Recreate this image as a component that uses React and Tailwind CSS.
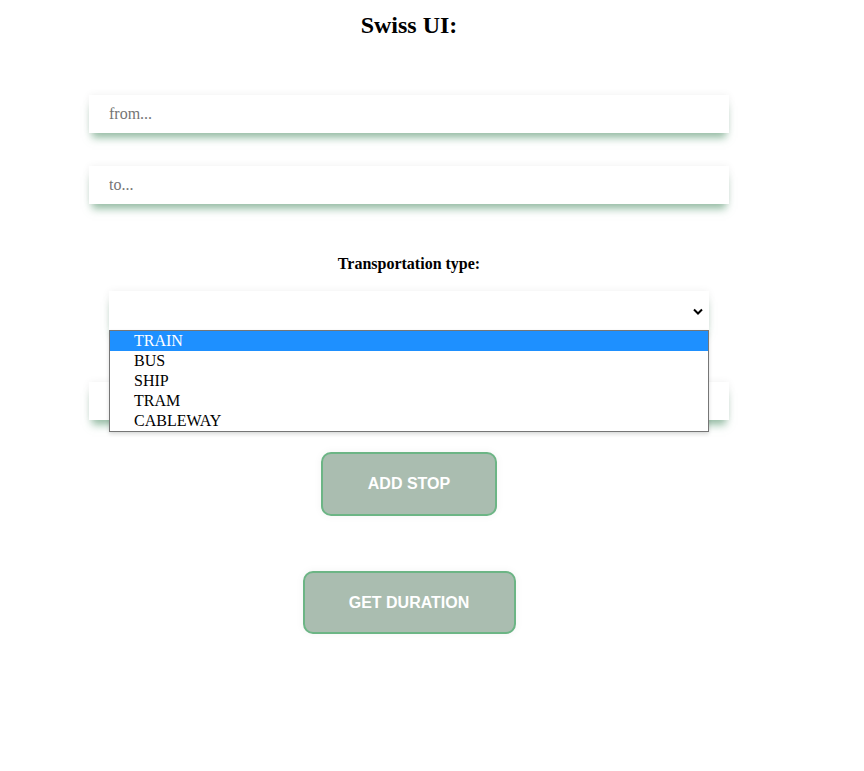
import React from "react";

const serif = { fontFamily: "'Liberation Serif', 'Times New Roman', serif" };
const sans = { fontFamily: "'Liberation Sans', Arial, sans-serif" };

const fieldShadow =
  "shadow-[0_0_8px_rgba(0,0,0,0.06),0_8px_8px_-3px_rgba(90,155,115,0.6)]";

const options = ["TRAIN", "BUS", "SHIP", "TRAM", "CABLEWAY"];

function TextField({ placeholder, className = "" }) {
  return (
    <input
      type="text"
      placeholder={placeholder}
      className={`w-[640px] h-[38px] bg-white pl-5 text-[16px] text-black placeholder:text-[#757575] outline-none ${fieldShadow} ${className}`}
      style={serif}
    />
  );
}

function ActionButton({ children, className = "" }) {
  return (
    <button
      type="button"
      className={`bg-[#aabdb0] border-2 border-[#6cb585] rounded-[10px] text-white font-bold text-[16px] shadow-[0_0_8px_rgba(0,0,0,0.05)] ${className}`}
      style={sans}
    >
      {children}
    </button>
  );
}

export default function App() {
  return (
    <div className="min-h-screen bg-white">
      <div className="w-[818px] flex flex-col items-center" style={serif}>
        <h2 className="pt-[12px] text-[24px] leading-[27px] font-bold text-black">
          Swiss UI:
        </h2>

        <TextField placeholder="from..." className="mt-[56px]" />
        <TextField placeholder="to..." className="mt-[33px]" />

        <label className="mt-[51px] text-[16px] leading-[18px] font-bold text-black">
          Transportation type:
        </label>

        <div className="relative mt-[18px] w-[600px]">
          <div
            className={`h-[39px] bg-white flex items-center justify-end pr-[6px] ${fieldShadow}`}
          >
            <svg width="10" height="7" viewBox="0 0 10 7" className="mt-[1px]">
              <path
                d="M1 1.5 L5 5.5 L9 1.5"
                fill="none"
                stroke="#000"
                strokeWidth="2"
              />
            </svg>
          </div>
          <ul className="absolute left-0 top-[39px] z-10 w-[600px] bg-white border border-[#767676] shadow-[0_2px_4px_rgba(0,0,0,0.15)]">
            {options.map((opt, i) => (
              <li
                key={opt}
                className={`h-5 pl-[24px] text-[16px] leading-5 ${
                  i === 0 ? "bg-[#1e90ff] text-white" : "text-black"
                }`}
              >
                {opt}
              </li>
            ))}
          </ul>
        </div>

        <TextField placeholder="" className="mt-[52px]" />

        <ActionButton className="mt-[32px] w-[176px] h-[64px]">ADD STOP</ActionButton>
        <ActionButton className="mt-[55px] w-[213px] h-[63px]">GET DURATION</ActionButton>
      </div>
    </div>
  );
}
